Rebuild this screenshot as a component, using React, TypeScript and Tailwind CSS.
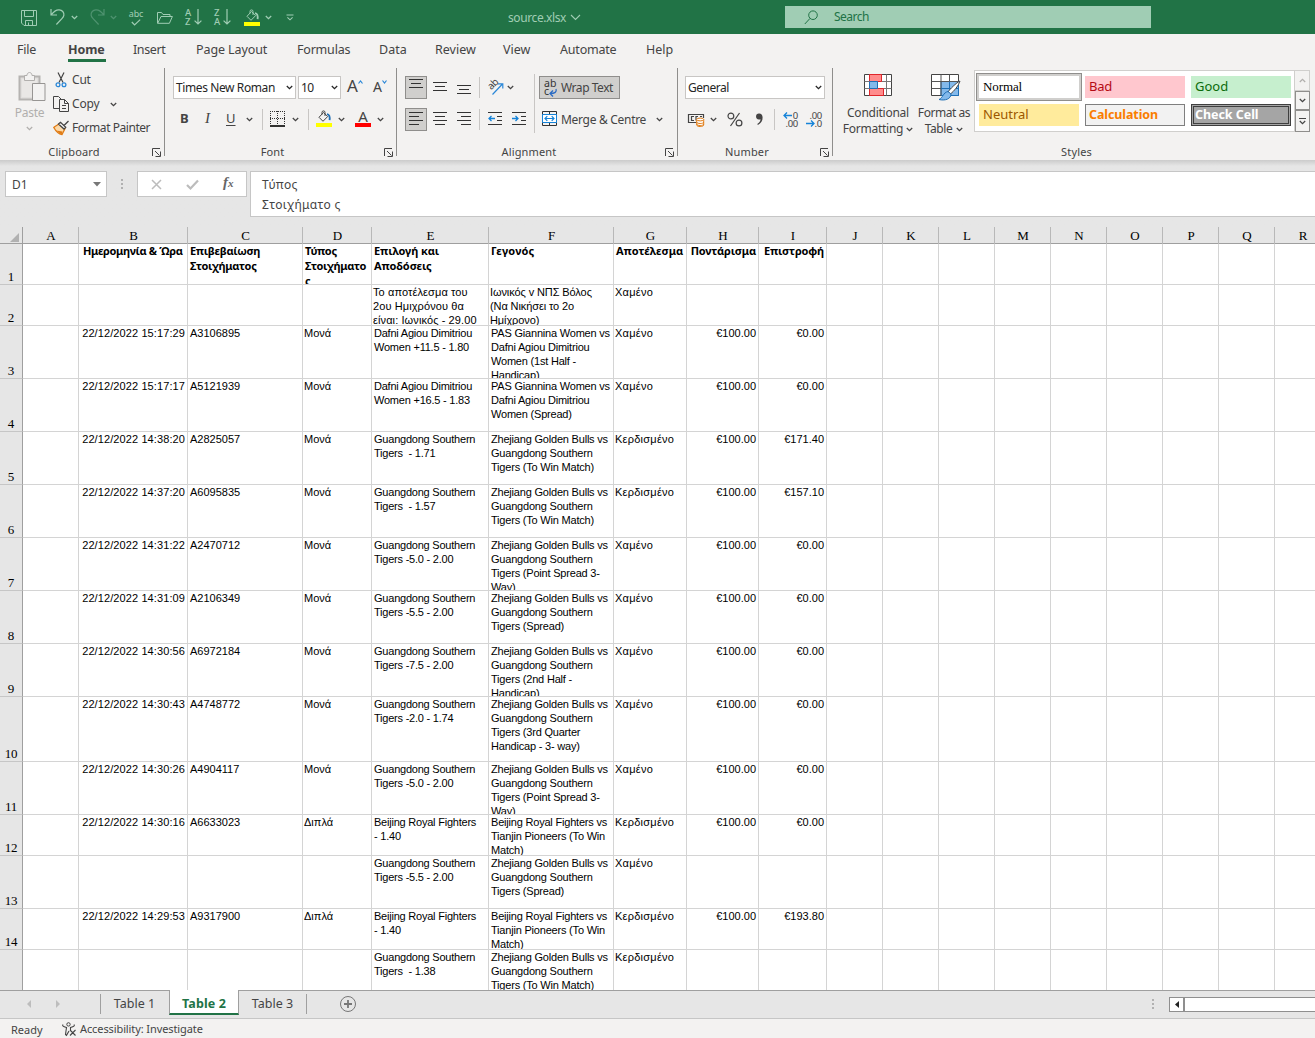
import type { ReactNode } from 'react'

type SheetRow = {
  n: number
  height: string
  date?: string
  id?: string
  type?: string
  pick: string
  event: string
  result: string
  stake?: string
  payout?: string
}

const southern = 'Guangdong Southern\nTigers '
const bulls = 'Zhejiang Golden Bulls vs\nGuangdong Southern\n'
const beijing = 'Beijing Royal Fighters'
const pas = 'PAS Giannina Women vs\nDafni Agiou Dimitriou\nWomen '

const rows: SheetRow[] = [
  { n: 2, height: 'h-[41px]', pick: 'Το αποτέλεσμα του\n2ου Ημιχρόνου θα\nείναι: Ιωνικός - 29.00', event: 'Ιωνικός v ΝΠΣ Βόλος\n(Να Νικήσει το 2ο\nΗμίχρονο)', result: 'Χαμένο' },
  { n: 3, height: 'h-[53px]', date: '22/12/2022 15:17:29', id: 'A3106895', type: 'Μονά', pick: 'Dafni Agiou Dimitriou\nWomen +11.5 - 1.80', event: pas + '(1st Half -\nHandicap)', result: 'Χαμένο', stake: '€100.00', payout: '€0.00' },
  { n: 4, height: 'h-[53px]', date: '22/12/2022 15:17:17', id: 'A5121939', type: 'Μονά', pick: 'Dafni Agiou Dimitriou\nWomen +16.5 - 1.83', event: pas + '(Spread)', result: 'Χαμένο', stake: '€100.00', payout: '€0.00' },
  { n: 5, height: 'h-[53px]', date: '22/12/2022 14:38:20', id: 'A2825057', type: 'Μονά', pick: southern + ' - 1.71', event: bulls + 'Tigers (To Win Match)', result: 'Κερδισμένο', stake: '€100.00', payout: '€171.40' },
  { n: 6, height: 'h-[53px]', date: '22/12/2022 14:37:20', id: 'A6095835', type: 'Μονά', pick: southern + ' - 1.57', event: bulls + 'Tigers (To Win Match)', result: 'Κερδισμένο', stake: '€100.00', payout: '€157.10' },
  { n: 7, height: 'h-[53px]', date: '22/12/2022 14:31:22', id: 'A2470712', type: 'Μονά', pick: southern + '-5.0 - 2.00', event: bulls + 'Tigers (Point Spread 3-\nWay)', result: 'Χαμένο', stake: '€100.00', payout: '€0.00' },
  { n: 8, height: 'h-[53px]', date: '22/12/2022 14:31:09', id: 'A2106349', type: 'Μονά', pick: southern + '-5.5 - 2.00', event: bulls + 'Tigers (Spread)', result: 'Χαμένο', stake: '€100.00', payout: '€0.00' },
  { n: 9, height: 'h-[53px]', date: '22/12/2022 14:30:56', id: 'A6972184', type: 'Μονά', pick: southern + '-7.5 - 2.00', event: bulls + 'Tigers (2nd Half -\nHandicap)', result: 'Χαμένο', stake: '€100.00', payout: '€0.00' },
  { n: 10, height: 'h-[65px]', date: '22/12/2022 14:30:43', id: 'A4748772', type: 'Μονά', pick: southern + '-2.0 - 1.74', event: bulls + 'Tigers (3rd Quarter\nHandicap - 3- way)', result: 'Χαμένο', stake: '€100.00', payout: '€0.00' },
  { n: 11, height: 'h-[53px]', date: '22/12/2022 14:30:26', id: 'A4904117', type: 'Μονά', pick: southern + '-5.0 - 2.00', event: bulls + 'Tigers (Point Spread 3-\nWay)', result: 'Χαμένο', stake: '€100.00', payout: '€0.00' },
  { n: 12, height: 'h-[41px]', date: '22/12/2022 14:30:16', id: 'A6633023', type: 'Διπλά', pick: beijing + '\n- 1.40', event: beijing + ' vs\nTianjin Pioneers (To Win\nMatch)', result: 'Κερδισμένο', stake: '€100.00', payout: '€0.00' },
  { n: 13, height: 'h-[53px]', pick: southern + '-5.5 - 2.00', event: bulls + 'Tigers (Spread)', result: 'Χαμένο' },
  { n: 14, height: 'h-[41px]', date: '22/12/2022 14:29:53', id: 'A9317900', type: 'Διπλά', pick: beijing + '\n- 1.40', event: beijing + ' vs\nTianjin Pioneers (To Win\nMatch)', result: 'Κερδισμένο', stake: '€100.00', payout: '€193.80' },
  { n: 15, height: 'h-[53px]', pick: southern + ' - 1.38', event: bulls + 'Tigers (To Win Match)', result: 'Κερδισμένο' },
]

const letters = 'ABCDEFGHIJKLMNOPQR'.split('')
const extraColumns = letters.slice(9)

const gridCols = 'grid grid-cols-[23px_56px_109px_115px_69px_117px_125px_73px_72px_68px_repeat(9,56px)]'

const menu = [
  { label: 'File', cls: 'w-[51px] tracking-[-0.2px]' },
  { label: 'Home', cls: 'w-[65px]' },
  { label: 'Insert', cls: 'w-[63px] tracking-[-0.4px]' },
  { label: 'Page Layout', cls: 'w-[101px] tracking-[-0.1px]' },
  { label: 'Formulas', cls: 'w-[82px] tracking-[-0.2px]' },
  { label: 'Data', cls: 'w-[56px]' },
  { label: 'Review', cls: 'w-[68px]' },
  { label: 'View', cls: 'w-[57px]' },
  { label: 'Automate', cls: 'w-[86px] tracking-[-0.2px]' },
  { label: 'Help', cls: 'w-[60px]' },
]

function Chevron({ className = '' }: { className?: string }) {
  return (
    <svg viewBox="0 0 7 5" className={`w-[7px] h-[5px] shrink-0 ${className}`} fill="none" stroke="currentColor" strokeWidth="1.3">
      <path d="M.8 1 3.5 3.6 6.2 1" />
    </svg>
  )
}

function Svg({ w, h, className = '', children }: { w: number; h: number; className?: string; children: ReactNode }) {
  return (
    <svg width={w} height={h} viewBox={`0 0 ${w} ${h}`} className={`shrink-0 overflow-visible ${className}`} fill="none" stroke="currentColor">
      {children}
    </svg>
  )
}

function Bucket({ className = '', drop, pen }: { className?: string; drop: string; pen: string }) {
  return (
    <Svg w={16} h={17} className={className}>
      <path d="M7.5 2.5 3 7.3 7 11.3 11.7 6.5z" stroke={pen} />
      <path d="M6 4.5V2.4a1.5 1.5 0 0 1 3 0V6" stroke={pen} />
      <path d="M11 4.2c2.3.2 3 2.2 2.6 6" stroke={drop} strokeWidth="1.8" />
      <path d="M0 13h16v4H0z" fill="#ffff00" stroke="none" />
    </Svg>
  )
}

function SortIcon({ top, bottom, className = '' }: { top: string; bottom: string; className?: string }) {
  return (
    <div className={`flex w-[17px] h-[18px] ${className}`}>
      <div className="flex flex-col w-[8px] text-[9.5px] leading-[9px] font-medium">
        <span>{top}</span>
        <span>{bottom}</span>
      </div>
      <Svg w={9} h={18}>
        <path d="M5 1v15M1.6 12.6 5 16l3.4-3.4" strokeWidth="1.2" />
      </Svg>
    </div>
  )
}

function TitleBar() {
  return (
    <div className="flex items-center h-[34px] bg-[#217346] text-[#a0cdb4]">
      <Svg w={16} h={16} className="ml-[21px] mt-[2px]">
        <path d="M.5.5h15v15H3L.5 13zM3.5.5v6h9v-6M4.5 15.5v-5h7v5M7.5 12.5v3" />
      </Svg>
      <Svg w={16} h={18} className="ml-[13px]">
        <path d="M1 1v6h6M1.3 6.7C4 3 6.6 1.6 9.2 1.8c3 .2 5 2.6 4.7 5.3-.2 1.4-1 2.5-2 3.6L6.4 16.5" strokeWidth="1.2" />
      </Svg>
      <Chevron className="ml-[5px]" />
      <div className="flex items-center ml-[11px] text-[#4f9370]">
        <Svg w={16} h={18}>
          <path d="M15 1v6H9M14.7 6.7C12 3 9.4 1.6 6.8 1.8c-3 .2-5 2.6-4.7 5.3.2 1.4 1 2.5 2 3.6L9.6 16.5" strokeWidth="1.2" />
        </Svg>
        <Chevron className="ml-[5px]" />
      </div>
      <div className="flex flex-col items-center w-[14px] ml-[12px]">
        <span className="text-[9px] leading-[9px] tracking-[-0.2px]">abc</span>
        <Svg w={10} h={7} className="mt-px">
          <path d="M.8 3 3.6 6 9.2.6" strokeWidth="1.2" />
        </Svg>
      </div>
      <Svg w={16} h={13} className="ml-[14px]">
        <path d="M.5 12.3V1.5h4l1.5 2h7v2M.7 12.3 4 5.5h11.4l-3 6.8z" />
      </Svg>
      <SortIcon top="A" bottom="Z" className="ml-[12px]" />
      <SortIcon top="Z" bottom="A" className="ml-[12px]" />
      <Bucket className="ml-[13px]" drop="#a0cdb4" pen="#a0cdb4" />
      <Chevron className="ml-[5px]" />
      <Svg w={8} h={7} className="ml-[14px]">
        <path d="M.5 1h7M1.4 3.4 4 5.8l2.6-2.4" strokeWidth="1.1" />
      </Svg>
      <span className="ml-[214px] w-[61px] pt-px text-[12px] tracking-[-0.4px] whitespace-nowrap">source.xlsx</span>
      <Svg w={11} h={7} className="ml-[1px]">
        <path d="M1 1l4.5 4.5L10 1" strokeWidth="1.1" />
      </Svg>
      <div className="flex items-center ml-[204px] w-[366px] h-[22px] bg-[#a0cdb4] text-[#217346]">
        <Svg w={14} h={15} className="ml-[19px]">
          <circle cx="9" cy="5.2" r="4.3" />
          <path d="M6 8.4.8 14" />
        </Svg>
        <span className="ml-[16px] text-[12px] tracking-[-0.5px]">Search</span>
      </div>
    </div>
  )
}

function Menu() {
  return (
    <div className="flex h-[30px] pl-[17px] text-[12.5px] leading-[32px] whitespace-nowrap">
      {menu.map(({ label, cls }) => (
        <div key={label} className={cls}>
          {label === 'Home' ? (
            <span className="block w-[38px] h-[28px] border-b-[3px] border-[#217346] font-bold tracking-[-0.1px]">{label}</span>
          ) : (
            label
          )}
        </div>
      ))}
    </div>
  )
}

function Group({ label, className, launcher = true, children }: { label: string; className: string; launcher?: boolean; children: ReactNode }) {
  return (
    <div className={`flex flex-col shrink-0 h-[92px] ${className}`}>
      <div className="flex h-[76px]">{children}</div>
      <div className="flex items-center h-4 text-[11px] tracking-[0.15px]">
        <span className="flex-1 text-center">{label}</span>
        {launcher && (
          <Svg w={9} h={9} className="ml-1 mr-[3px]">
            <path d="M.5 8V.5H8M3 3l4.5 4.5M8.5 3.5v5h-5" />
          </Svg>
        )}
      </div>
    </div>
  )
}

function Divider() {
  return <div className="shrink-0 w-px h-[88px] bg-[#8f8e8c]" />
}

function Bar({ className = '' }: { className?: string }) {
  return <div className={`shrink-0 w-px h-[21px] bg-[#c8c6c4] ${className}`} />
}

function Lines({ d, className = '' }: { d: string; className?: string }) {
  return (
    <Svg w={14} h={15} className={className}>
      <path d={d} stroke="#333" />
    </Svg>
  )
}

function Clipboard() {
  return (
    <Group label="Clipboard" className="w-[164px]">
      <div className="flex flex-col items-center w-[29px] ml-[15px] text-[#b1afad]">
        <Svg w={28} h={31} className="mt-[3px] ml-[4px]">
          <path d="M1.5 5.5h20v23h-20z" stroke="#b5b3b1" strokeWidth="2" fill="#e1dfdd" />
          <path d="M4 8h15v18H4z" fill="#e9e7e5" stroke="none" />
          <path d="M6.5 9.5V4.5H9c0-4 5-4 5 0h2.5v5z" fill="#f3f2f1" />
          <path d="M14.5 12.5h12.5v17H14.5z" fill="#f3f2f1" stroke="#979593" />
        </Svg>
        <span className="mt-[2px] text-[12px] leading-[18px] tracking-[-0.3px]">Paste</span>
        <Chevron className="mt-[4px]" />
      </div>
      <div className="flex flex-col ml-[9px] text-[12px]">
        <div className="flex items-center h-6 pl-[2px]">
          <Svg w={12} h={16}>
            <path d="M3 .5l5 10M9 .5l-5 10" stroke="#444" strokeWidth="1.2" />
            <circle cx="3" cy="12.8" r="1.9" stroke="#2b88d8" strokeWidth="1.3" />
            <circle cx="9" cy="12.8" r="1.9" stroke="#2b88d8" strokeWidth="1.3" />
          </Svg>
          <span className="ml-[5px] tracking-[-0.2px]">Cut</span>
        </div>
        <div className="flex items-center h-6">
          <Svg w={17} h={16}>
            <path d="M6 12.5H.5V.5h5l3 3M6.5 3.5h5l4 4v8h-9zM11.5 3.5v4h4M9 9.5h4M9 12.5h4" stroke="#444" />
          </Svg>
          <span className="ml-[2px] w-[29px] tracking-[-0.2px]">Copy</span>
          <Chevron className="ml-[9px]" />
        </div>
        <div className="flex items-center h-6">
          <Svg w={17} h={16}>
            <path d="M2 6.5 7.5 3 12 8.5 9 14.5C5 14 3 11.5.8 7.5z" fill="#fcd9a8" stroke="#e07b14" strokeWidth="1.3" />
            <path d="M3 10.5l5.5 4 1-3z" fill="#e07b14" stroke="none" />
            <path d="M5.5 4l5.5 5 1.7-1.7-5.2-5zM11 5.5l4.5-4.5" stroke="#444" fill="#fff" strokeWidth="1.3" />
          </Svg>
          <span className="ml-[2px] tracking-[-0.45px] whitespace-nowrap">Format Painter</span>
        </div>
      </div>
    </Group>
  )
}

function Select({ value, className }: { value: string; className: string }) {
  return (
    <div className={`flex items-center justify-between h-[23px] pl-[2px] pr-[2px] bg-white border border-[#c8c6c4] text-[12px] text-[#262626] whitespace-nowrap ${className}`}>
      <span>{value}</span>
      <Chevron />
    </div>
  )
}

function FontGroup() {
  return (
    <Group label="Font" className="w-[231px]">
      <div className="flex flex-col gap-[9px] pt-2 pl-2">
        <div className="flex items-center h-[23px]">
          <Select value="Times New Roman" className="w-[123px] tracking-[-0.4px]" />
          <Select value="10" className="w-[43px] ml-[2px] tracking-[-0.6px]" />
          <span className="ml-[6px] -mt-[3px] text-[17px] leading-[20px]">A</span>
          <Svg w={5} h={4} className="mb-3">
            <path d="M.5 3.5l2-2.5 2 2.5" stroke="#2b88d8" strokeWidth="1.2" />
          </Svg>
          <span className="ml-[10px] -mt-[2px] text-[14px] leading-[20px]">A</span>
          <Svg w={5} h={4} className="mb-3">
            <path d="M.5.5l2 2.5 2-2.5" stroke="#2b88d8" strokeWidth="1.2" />
          </Svg>
        </div>
        <div className="flex items-center h-[23px] pl-[6px] text-[13px] leading-[20px]">
          <span className="w-[25px] -mt-[3px] pl-px font-bold">B</span>
          <span className="w-[21px] -mt-[3px] pl-px font-['Liberation_Serif',serif] italic text-[15px]">I</span>
          <span className="w-[10px] -mt-[3px] ml-px underline underline-offset-2">U</span>
          <Chevron className="ml-[10px]" />
          <Bar className="ml-[9px]" />
          <Svg w={15} h={16} className="ml-[7px] -mt-[2px]">
            <path d="M.5 0v14M14.5 0v14M7.5 0v14M0 .5h15M0 7.5h15" stroke="#333" strokeDasharray="1 1" />
            <path d="M0 15h15" stroke="#000" strokeWidth="1.6" />
          </Svg>
          <Chevron className="ml-[7px]" />
          <Bar className="ml-[9px]" />
          <Bucket className="ml-[7px] -mt-[2px]" drop="#1f6fb5" pen="#444" />
          <Chevron className="ml-[6px]" />
          <div className="flex flex-col items-center w-4 ml-[10px] -mt-[2px]">
            <span className="text-[15px] leading-[13px]">A</span>
            <div className="w-4 h-[4px] bg-[#ff0000]" />
          </div>
          <Chevron className="ml-[6px]" />
        </div>
      </div>
    </Group>
  )
}

function Alignment() {
  return (
    <Group label="Alignment" className="w-[280px]">
      <div className="flex flex-col gap-[9px] pt-2 pl-2">
        <div className="flex items-center h-[23px]">
          <div className="flex justify-center w-[22px] h-[23px] pt-[1px] border border-[#8f8e8c] bg-[#d0cfcd]">
            <Lines d="M0 1.5h14M2 5.5h10M0 9.5h14" />
          </div>
          <Lines className="ml-[6px]" d="M0 2.5h14M2 6.5h10M0 10.5h14" />
          <Lines className="ml-[10px]" d="M0 5.5h14M2 9.5h10M0 13.5h14" />
          <Bar className="ml-[8px]" />
          <div className="flex w-[17px] h-[17px] ml-[7px]">
            <span className="w-[10px] h-[10px] -rotate-45 text-[10px] leading-[10px] tracking-[-0.4px]">ab</span>
            <Svg w={7} h={17}>
              <path d="M-4.5 15.5 5 5.5M1 4.8h4.8V9.5" stroke="#2b88d8" strokeWidth="1.2" />
            </Svg>
          </div>
          <Chevron className="ml-[3px]" />
        </div>
        <div className="flex items-center h-[23px]">
          <div className="flex justify-center w-[22px] h-[23px] pt-[3px] border border-[#8f8e8c] bg-[#d0cfcd]">
            <Lines d="M0 .5h14M0 4.5h10M0 8.5h14M0 12.5h10" />
          </div>
          <Lines className="ml-[6px] -mt-[2px]" d="M0 1.5h14M2 5.5h10M0 9.5h14M2 13.5h10" />
          <Lines className="ml-[10px] -mt-[2px]" d="M0 1.5h14M4 5.5h10M0 9.5h14M4 13.5h10" />
          <Bar className="ml-[8px]" />
          <Svg w={15} h={15} className="ml-[8px] -mt-[2px]">
            <path d="M0 1.5h14M9 5.5h5M9 9.5h5M0 13.5h14" stroke="#333" />
            <path d="M1 7.5h6M3.5 5 1 7.5 3.5 10" stroke="#1583d8" strokeWidth="1.3" />
          </Svg>
          <Svg w={15} h={15} className="ml-[9px] -mt-[2px]">
            <path d="M0 1.5h14M9 5.5h5M9 9.5h5M0 13.5h14" stroke="#333" />
            <path d="M0 7.5h6M3.5 5 6 7.5 3.5 10" stroke="#1583d8" strokeWidth="1.3" />
          </Svg>
        </div>
      </div>
      <div className="w-px h-[59px] mt-[6px] ml-auto bg-[#c8c6c4]" />
      <div className="flex flex-col gap-[9px] w-[138px] pt-2 mr-1 pl-1 text-[12px] whitespace-nowrap">
        <div className="flex items-center w-[81px] h-[23px] pl-1 border border-[#8f8e8c] bg-[#d0cfcd]">
          <div className="flex flex-col w-[15px] h-[18px] text-[10.5px] leading-[8px] text-[#333]">
            <span>ab</span>
            <span className="flex">
              c
              <Svg w={8} h={8} className="mt-[2px]">
                <path d="M7 0c1 3-1 4.500-6 4.500M4 1.500l-3 3 3 3" stroke="#2b6cc4" strokeWidth="1.3" />
              </Svg>
            </span>
          </div>
          <span className="ml-[2px] tracking-[-0.45px]">Wrap Text</span>
        </div>
        <div className="flex items-center h-[23px] pl-[3px]">
          <Svg w={15} h={15} className="-mt-[2px]">
            <path d="M.5.5h14v14H.5zM7.5.5v3M7.5 11.5v3" stroke="#333" />
            <path d="M.5 3.5h14v8H.5z" fill="#fff" stroke="#1583d8" />
            <path d="M3 7.5h9M5.3 5.2 3 7.5l2.3 2.3M9.7 5.2 12 7.5 9.7 9.8" stroke="#1583d8" strokeWidth="1.2" />
          </Svg>
          <span className="w-[86px] ml-[4px] tracking-[-0.3px]">Merge &amp; Centre</span>
          <Chevron className="ml-[9px]" />
        </div>
      </div>
    </Group>
  )
}

function NumberGroup() {
  return (
    <Group label="Number" className="w-[154px]">
      <div className="flex flex-col gap-[9px] pt-2 pl-[7px]">
        <Select value="General" className="w-[140px] tracking-[-0.5px]" />
        <div className="flex items-center h-[23px]">
          <Svg w={17} h={14} className="ml-[3px]">
            <path d="M8 9.5H.5v-8h15V5M6 3.5H3.5v4H6M10 3.5H8v4M14 3.5h-2" stroke="#444" strokeWidth="1.2" />
            <path d="M8.7 6.5v5.5c0 2 7 2 7 0V6.5z" fill="#fff" stroke="#e07b14" />
            <ellipse cx="12.2" cy="6.5" rx="3.5" ry="1.4" fill="#fff" stroke="#e07b14" />
            <path d="M8.7 9c0 2 7 2 7 0M8.7 11c0 2 7 2 7 0" stroke="#e07b14" />
          </Svg>
          <Chevron className="ml-[5px]" />
          <Svg w={16} h={15} className="ml-[10px]">
            <circle cx="3.9" cy="4" r="2.9" stroke="#444" strokeWidth="1.2" />
            <circle cx="12" cy="11" r="2.9" stroke="#444" strokeWidth="1.2" />
            <path d="M12.5 1 3.5 14" stroke="#444" strokeWidth="1.2" />
          </Svg>
          <Svg w={9} h={13} className="ml-[12px]">
            <path d="M4.2.5a3 3 0 0 0-.3 6c.7.1 1.300 0 1.700-.3-.3 2-1.400 3.600-3.300 4.800l.6.900C6 10.500 7.800 7.500 7.600 4.200 7.500 2 6.200.5 4.200.5z" fill="#444" stroke="none" />
          </Svg>
          <Bar className="ml-[10px]" />
          <div className="flex flex-col items-end w-4 ml-[7px] text-[9.5px] leading-[8px] tracking-[-0.3px]">
            <span className="flex items-center">
              <Svg w={9} h={7}>
                <path d="M0 3.5h8M3 .5l-3 3 3 3" stroke="#1583d8" strokeWidth="1.3" />
              </Svg>
              0
            </span>
            <span>.00</span>
          </div>
          <div className="flex flex-col items-end w-4 ml-[8px] text-[9.5px] leading-[8px] tracking-[-0.3px]">
            <span>.00</span>
            <span className="flex items-center">
              <Svg w={9} h={7}>
                <path d="M0 3.5h8M5 .5l3 3-3 3" stroke="#1583d8" strokeWidth="1.3" />
              </Svg>
              .0
            </span>
          </div>
        </div>
      </div>
    </Group>
  )
}

function StylesGroup() {
  return (
    <Group label="Styles" className="w-[487px]" launcher={false}>
      <div className="flex flex-col items-center w-[74px] ml-[8px] pt-[6px] text-[12px] leading-4 tracking-[-0.25px] whitespace-nowrap">
        <Svg w={28} h={22}>
          <path d="M.5.5h27v21H.5z" stroke="#444" fill="#fff" />
          <path d="M.5 7.5h27M.5 14.5h27M22.5.5v21" stroke="#777" />
          <path d="M5.5.5h12v7h-12zM5.5 14.5h14v7h-14z" fill="#ff8c8c" stroke="#e0262b" />
          <path d="M5.5 7.5h8v7h-8z" fill="#83b9eb" stroke="#1f6fb5" />
        </Svg>
        <span className="mt-[9px]">Conditional</span>
        <span className="flex items-center gap-[3px]">
          Formatting <Chevron />
        </span>
      </div>
      <div className="flex flex-col items-center w-[56px] ml-px pt-[6px] text-[12px] leading-4 tracking-[-0.45px] whitespace-nowrap">
        <Svg w={30} h={27} className="ml-1">
          <path d="M.5.5h27v21H.5z" stroke="#444" fill="#fff" />
          <path d="M10 7.5h17.5v14H10z" fill="#83b9eb" stroke="#1f6fb5" />
          <path d="M.5 7.5h27M.5 14.5h9.5M10 .5v21M18.5.5v7" stroke="#555" />
          <path d="M10 14.5h17.5M18.5 7.5v14" stroke="#1f6fb5" />
          <path d="M29 7c-4 2-10 8-12 11l2.5 2C23 17 27.5 12 29 7z" fill="#fff" stroke="#444" />
          <path d="M17 17.5l3 2.5c0 5-6 7-12 5.5 4-1.5 4-7 9-8z" fill="#83b9eb" stroke="#1f6fb5" />
        </Svg>
        <span className="mt-[4px]">Format as</span>
        <span className="flex items-center gap-1">
          Table <Chevron />
        </span>
      </div>
      <div className="flex h-[62px] mt-[2px] ml-[2px]">
        <div className="grid grid-cols-3 grid-rows-[28px_28px] gap-x-[6px] w-[321px] pl-[4px] pt-[1px] pr-[3px] border border-[#d0cfcd] bg-white text-[13px] leading-[21px]">
          <div className="w-[106px] h-[28px] -ml-[3px] p-[2px] mt-[1px] border border-[#8f8e8c] bg-[#d0cfcd]">
            <div className="h-full pl-[4px] bg-white font-['Liberation_Serif',serif] text-[13px] text-black leading-[22px] tracking-[-0.1px]">Normal</div>
          </div>
          <div className="h-[22px] mt-[4px] pl-1 bg-[#ffc7ce] text-[#b50a14] tracking-[-0.3px]">Bad</div>
          <div className="h-[22px] mt-[4px] pl-1 bg-[#c6efce] text-[#0b6b0b]">Good</div>
          <div className="h-[22px] mt-[4px] pl-1 bg-[#ffeb9c] text-[#9c5700]">Neutral</div>
          <div className="h-[22px] mt-[4px] pl-[3px] border border-[#7f7f7f] bg-[#f2f2f2] text-[#fa7d00] font-bold text-[12.5px] leading-5 tracking-[-0.1px]">Calculation</div>
          <div className="h-[22px] mt-[4px] p-px border border-[#3f3f3f] bg-[#a5a5a5]">
            <div className="h-full pl-[1px] border border-[#3f3f3f] text-white font-bold text-[12.5px] leading-4 tracking-[-0.05px]">Check Cell</div>
          </div>
        </div>
        <div className="flex flex-col w-[15px]">
          <div className="flex items-center justify-center h-[21px] border border-l-0 border-[#d0cfcd] text-[#b1afad]">
            <Chevron className="rotate-180" />
          </div>
          <div className="flex items-center justify-center h-[19px] border border-[#8f8e8c]">
            <Chevron />
          </div>
          <div className="flex items-center justify-center h-[22px] border border-[#8f8e8c]">
            <Svg w={7} h={7}>
              <path d="M0 .5h7M.8 3 3.5 5.6 6.2 3" strokeWidth="1.2" />
            </Svg>
          </div>
        </div>
      </div>
    </Group>
  )
}

function FormulaBar() {
  return (
    <div className="flex items-start h-[67px] pt-[11px] pl-[5px] bg-linear-to-b from-[#cbcbcb] to-[#e6e6e6] to-[6px] text-[12px]">
      <div className="flex items-center justify-between w-[102px] h-[26px] pl-[6px] pr-[5px] border border-[#c6c6c6] bg-white">
        <span className="pt-px">D1</span>
        <Svg w={8} h={5}>
          <path d="M0 0h8L4 4.5z" fill="#777" stroke="none" />
        </Svg>
      </div>
      <Svg w={2} h={11} className="mt-[8px] ml-[14px]">
        <path d="M0 0h2v2H0zM0 4h2v2H0zM0 8h2v2H0z" fill="#b1b1b1" stroke="none" />
      </Svg>
      <div className="flex items-center w-[110px] h-[26px] ml-[14px] border border-[#c6c6c6] bg-white">
        <Svg w={11} h={11} className="ml-[13px]">
          <path d="M1 1l9 9M10 1l-9 9" stroke="#bcbcbc" strokeWidth="1.5" />
        </Svg>
        <Svg w={13} h={11} className="ml-[24px]">
          <path d="M1 6l3.500 3.500L12 1.500" stroke="#bcbcbc" strokeWidth="2.2" />
        </Svg>
        <span className="ml-[24px] mb-1 font-['Liberation_Serif',serif] italic font-bold text-[15px] leading-4 text-[#666]">
          f<span className="text-[11px]">x</span>
        </span>
      </div>
      <div className="flex-1 h-[46px] ml-[3px] pt-[3px] pl-[11px] border border-r-0 border-[#c6c6c6] bg-white leading-5 tracking-[0.35px] whitespace-nowrap">
        <div>Τύπος</div>
        <div>Στοιχήματο ς</div>
      </div>
    </div>
  )
}

function Cell({ children, className = '' }: { children?: ReactNode; className?: string }) {
  return <div className={`h-full border-r border-b border-[#d4d4d4] overflow-hidden whitespace-pre ${className}`}>{children}</div>
}

function HeadCell({ children, className = '' }: { children: ReactNode; className?: string }) {
  return (
    <Cell className={className}>
      <div className="-mt-px">{children}</div>
    </Cell>
  )
}

function RowNumber({ n }: { n: number }) {
  return (
    <div className="flex items-end justify-center h-full border-r border-b border-r-[#9f9f9f] border-b-[#c6c6c6] bg-[#e6e6e6] font-['Liberation_Serif',serif] font-normal text-[13px] leading-[15px] tracking-[-0.2px]">
      {n}
    </div>
  )
}

function Sheet() {
  return (
    <div className="h-[763px] overflow-hidden bg-white text-black">
      <div className={`${gridCols} h-[17px] border-b border-[#9f9f9f] bg-[#e6e6e6] font-['Liberation_Serif',serif] text-[13px] leading-[18px] text-center`}>
        <div className="flex justify-end items-end pr-[3px] pb-[3px] border-r border-[#9f9f9f]">
          <Svg w={9} h={9}>
            <path d="M9 0v9H0z" fill="#b1b1b1" stroke="none" />
          </Svg>
        </div>
        {letters.map((letter) => (
          <div key={letter} className="pl-px border-r border-[#b8b8b8]">
            {letter}
          </div>
        ))}
      </div>
      <div className={`${gridCols} h-[41px] text-[11px] leading-[15px] font-bold`}>
        <RowNumber n={1} />
        <Cell />
        <HeadCell className="pl-1 tracking-[-0.35px]">Ημερομηνία &amp; Ώρα</HeadCell>
        <HeadCell className="pl-[2px] tracking-[-0.3px]">{'Επιβεβαίωση\nΣτοιχήματος'}</HeadCell>
        <HeadCell className="pl-[2px] tracking-[-0.3px]">{'Τύπος\nΣτοιχήματο\nς'}</HeadCell>
        <HeadCell className="pl-[2px] tracking-[-0.1px]">{'Επιλογή και\nΑποδόσεις'}</HeadCell>
        <HeadCell className="pl-[2px] tracking-[0.2px]">Γεγονός</HeadCell>
        <HeadCell className="pl-[2px]">Αποτέλεσμα</HeadCell>
        <HeadCell className="pr-[2px] text-right tracking-[-0.15px]">Ποντάρισμα</HeadCell>
        <HeadCell className="pr-[2px] text-right tracking-[-0.15px]">Επιστροφή</HeadCell>
        {extraColumns.map((c) => (
          <Cell key={c} />
        ))}
      </div>
      {rows.map((row) => (
        <div key={row.n} className={`${gridCols} ${row.height} font-['Liberation_Sans',sans-serif] text-[11px] leading-[14px]`}>
          <RowNumber n={row.n} />
          <Cell />
          <Cell className="pr-[2px] text-right tracking-[0.1px]">{row.date}</Cell>
          <Cell className="pl-[2px]">{row.id}</Cell>
          <Cell className="pl-[1px]">{row.type}</Cell>
          <Cell className={row.n === 2 ? 'pl-[1px] tracking-[0.1px]' : 'pl-[2px] tracking-[-0.22px]'}>{row.pick}</Cell>
          <Cell className={row.n === 2 ? 'pl-[1px] tracking-[-0.1px]' : 'pl-[2px] tracking-[-0.2px]'}>{row.event}</Cell>
          <Cell className="pl-[1px] tracking-[0.25px]">{row.result}</Cell>
          <Cell className="pr-[2px] text-right">{row.stake}</Cell>
          <Cell className="pr-[2px] text-right">{row.payout}</Cell>
          {extraColumns.map((c) => (
            <Cell key={c} />
          ))}
        </div>
      ))}
    </div>
  )
}

function SheetTabs() {
  return (
    <div className="flex h-[29px] border-t border-b border-t-[#9f9f9f] border-b-[#c6c6c6] bg-[#e6e6e6] text-[12.5px] leading-[25px]">
      <Svg w={35} h={8} className="mt-[9px] ml-[27px]">
        <path d="M4 0v8L0 4zM29 0v8l4-4z" fill="#bdbdbd" stroke="none" />
      </Svg>
      <div className="w-px h-5 mt-[3px] ml-[38px] bg-[#9f9f9f]" />
      <div className="w-[68px] pr-px text-center">Table 1</div>
      <div className="w-[70px] h-[25px] -mt-px border-x border-b-2 border-x-[#9f9f9f] border-b-[#217346] bg-white text-[#217346] text-center leading-[27px] font-bold tracking-[0.1px]">Table 2</div>
      <div className="w-[67px] text-center">Table 3</div>
      <div className="w-px h-5 mt-[3px] bg-[#9f9f9f]" />
      <Svg w={17} h={17} className="mt-[5px] ml-[33px]">
        <circle cx="8" cy="8" r="7.5" stroke="#777" />
        <path d="M8 4v8M4 8h8" stroke="#777" strokeWidth="1.8" />
      </Svg>
      <Svg w={2} h={11} className="mt-[8px] ml-auto">
        <path d="M0 0h2v2H0zM0 4h2v2H0zM0 8h2v2H0z" fill="#b1b1b1" stroke="none" />
      </Svg>
      <div className="flex w-[146px] h-[15px] mt-[6px] ml-[15px] border border-r-0 border-[#8f8f8f] bg-white">
        <div className="flex items-center justify-center w-[15px] border-r-2 border-[#8f8f8f]">
          <Svg w={4} h={7}>
            <path d="M4 0v7L0 3.5z" fill="#222" stroke="none" />
          </Svg>
        </div>
      </div>
    </div>
  )
}

function StatusBar() {
  return (
    <div className="flex items-center h-[19px] pl-[11px] bg-[#f3f2f1] text-[11px] whitespace-nowrap">
      <span className="w-[51px] pt-[3px]">Ready</span>
      <Svg w={14} h={14}>
        <circle cx="6.5" cy="2.4" r="1.7" />
        <path d="M1 2.5c-1 1.5 0 2 3.5 3L3.5 12.5l1 .8L7 9M12 2.5c1 1.5 0 2-3.5 3V8M8 8l5.5 5.5M13.5 8 8 13.5" strokeWidth="1.1" />
      </Svg>
      <span className="ml-[4px] pt-px tracking-[-0.1px]">Accessibility: Investigate</span>
    </div>
  )
}

export default function App() {
  return (
    <div className="flex flex-col w-[1315px] h-[1038px] overflow-hidden bg-[#f3f2f1] font-['Noto_Sans','Open_Sans',sans-serif] text-[#444]">
      <TitleBar />
      <Menu />
      <div className="flex h-[96px] pt-1 overflow-hidden">
        <Clipboard />
        <Divider />
        <FontGroup />
        <Divider />
        <Alignment />
        <Divider />
        <NumberGroup />
        <Divider />
        <StylesGroup />
      </div>
      <FormulaBar />
      <Sheet />
      <SheetTabs />
      <StatusBar />
    </div>
  )
}
